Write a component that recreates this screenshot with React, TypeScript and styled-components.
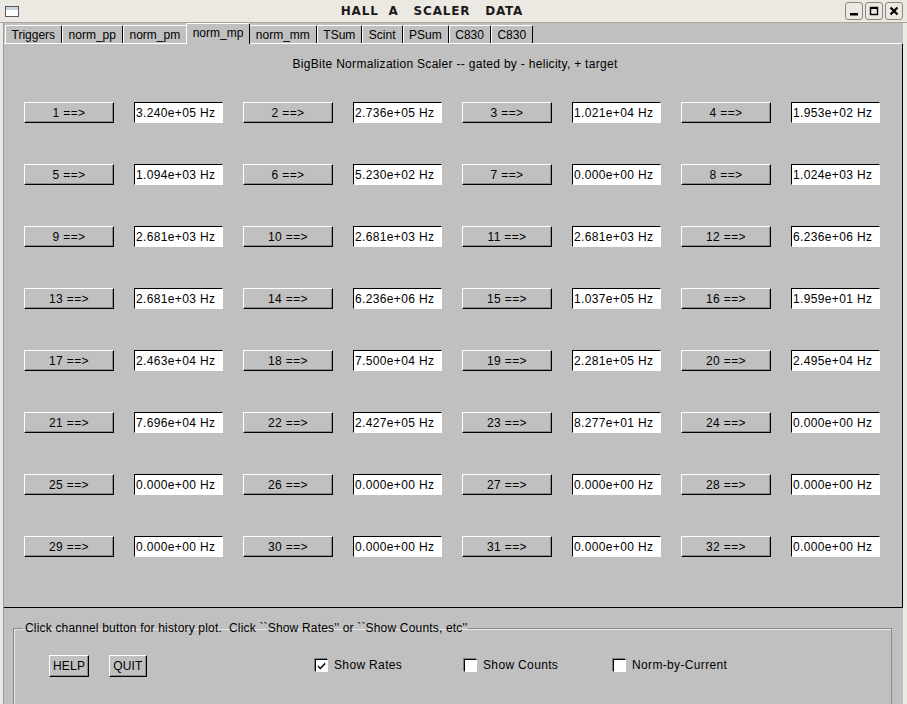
import React from 'react';
import styled, { createGlobalStyle } from 'styled-components';

const Global = createGlobalStyle`
  html, body { margin: 0; padding: 0; background: #ece9e2; }
  body { font-family: "Liberation Sans", Arial, Helvetica, sans-serif; font-size: 12px; letter-spacing: 0.35px; color: #000; }
  * { box-sizing: border-box; }
`;

const Window = styled.div`
  width: 907px;
  height: 704px;
  display: flex;
  flex-direction: column;
  background: #ece9e2;
  overflow: hidden;
`;

const TitleBar = styled.div`
  height: 23px;
  flex: none;
  display: flex;
  align-items: center;
  padding: 0 4px 0 5px;
  border-bottom: 1px solid #a9a59c;
`;

const TitleText = styled.div`
  flex: 1;
  text-align: center;
  white-space: pre;
  font-family: "DejaVu Sans", Verdana, sans-serif;
  font-weight: bold;
  font-size: 12px;
  letter-spacing: 0.8px;
  color: #1a1a1a;
`;

const TitleButtons = styled.div`
  display: flex;
  gap: 2px;
`;

const TitleButton = styled.div`
  width: 18px;
  height: 18px;
  border: 1px solid #8c877c;
  border-radius: 3px;
  background: #ece9e2;
  display: flex;
  align-items: center;
  justify-content: center;
`;

const Client = styled.div`
  flex: 1;
  display: flex;
  flex-direction: column;
  margin: 0 4px 0 3px;
  border-left: 1px solid #9a9a9a;
  background: #c0c0c0;
`;

const TabRow = styled.div`
  height: 20px;
  flex: none;
  display: flex;
  align-items: flex-end;
  padding-left: 1px;
  position: relative;
  z-index: 1;
`;

const Tab = styled.div<{ $active?: boolean }>`
  height: ${(p) => (p.$active ? 21 : 18)}px;
  margin: ${(p) => (p.$active ? '0 -1px -1px -1px' : '0')};
  padding: 2px 6px 0 5.5px;
  background: #c0c0c0;
  border-top: 1px solid #fff;
  border-left: 1px solid #fff;
  border-right: 1px solid #000;
  border-radius: 2px 2px 0 0;
  line-height: 14px;
  letter-spacing: 0;
  white-space: nowrap;
  position: relative;
  z-index: ${(p) => (p.$active ? 2 : 1)};
`;

const Panel = styled.div`
  height: 565px;
  flex: none;
  border-top: 1px solid #fff;
  border-right: 1px solid #000;
  border-bottom: 1px solid #000;
  display: flex;
  flex-direction: column;
  align-items: stretch;
`;

const Heading = styled.div`
  margin-top: 13px;
  line-height: 14px;
  text-align: center;
  padding-left: 4px;
  letter-spacing: 0.3px;
`;

const Grid = styled.div`
  margin-top: 31px;
  padding-left: 20px;
  display: grid;
  grid-template-columns: repeat(4, 90px 89px);
  grid-auto-rows: 21px;
  column-gap: 20px;
  row-gap: 41px;
`;

const ChanButton = styled.div`
  height: 21px;
  background: #c0c0c0;
  border: 1px solid;
  border-color: #fff #000 #000 #fff;
  box-shadow: inset -1px -1px 0 #8a8a8a;
  display: flex;
  align-items: center;
  justify-content: center;
  line-height: 14px;
  white-space: pre;
`;

const Entry = styled.div`
  height: 21px;
  background: #fff;
  border: 1px solid;
  border-color: #000 #fff #fff #000;
  display: flex;
  align-items: center;
  padding-left: 1px;
  line-height: 14px;
  white-space: nowrap;
`;

const Bottom = styled.div`
  flex: 1;
  padding: 13px 11px 0 9px;
`;

const Group = styled.fieldset`
  margin: 0;
  height: 120px;
  border: 1px solid #8a8a8a;
  box-shadow: inset 1px 1px 0 #e8e8e8;
  padding: 0;
`;

const Legend = styled.legend`
  margin-left: 9px;
  padding: 0 1px 0 2px;
  line-height: 14px;
  white-space: pre;
  letter-spacing: 0.18px;
`;

const Controls = styled.div`
  display: flex;
  align-items: center;
  margin-top: 20px;
  padding-left: 35px;
`;

const ButtonGroup = styled.div`
  width: 266px;
  display: flex;
  gap: 20px;
`;

const PushButton = styled.div`
  height: 22px;
  padding: 0 3px;
  background: #c0c0c0;
  border: 1px solid;
  border-color: #fff #000 #000 #fff;
  box-shadow: inset -1px -1px 0 #8a8a8a;
  display: flex;
  align-items: center;
  line-height: 14px;
  letter-spacing: 0.2px;
`;

const Check = styled.div`
  width: 149px;
  display: flex;
  align-items: center;
  gap: 6px;
  margin-top: -2px;
`;

const Box = styled.div`
  width: 13px;
  height: 13px;
  background: #fff;
  border: 1px solid;
  border-color: #000 #fff #fff #000;
  box-shadow: -1px -1px 0 #808080;
  display: flex;
  align-items: center;
  justify-content: center;
`;

const values = [
  ['3.240e+05', '2.736e+05', '1.021e+04', '1.953e+02'],
  ['1.094e+03', '5.230e+02', '0.000e+00', '1.024e+03'],
  ['2.681e+03', '2.681e+03', '2.681e+03', '6.236e+06'],
  ['2.681e+03', '6.236e+06', '1.037e+05', '1.959e+01'],
  ['2.463e+04', '7.500e+04', '2.281e+05', '2.495e+04'],
  ['7.696e+04', '2.427e+05', '8.277e+01', '0.000e+00'],
  ['0.000e+00', '0.000e+00', '0.000e+00', '0.000e+00'],
  ['0.000e+00', '0.000e+00', '0.000e+00', '0.000e+00'],
];

const tabs = ['Triggers', 'norm_pp', 'norm_pm', 'norm_mp', 'norm_mm', 'TSum', 'Scint', 'PSum', 'C830', 'C830'];

const WinIcon = () => (
  <svg width="14" height="11" viewBox="0 0 14 11">
    <rect x="0.5" y="0.5" width="13" height="10" fill="#fff" stroke="#5a5a5a" />
    <rect x="1" y="1" width="12" height="3" fill="#c9d4e4" />
  </svg>
);

const CheckBox = ({ checked, label }: { checked?: boolean; label: string }) => (
  <Check>
    <Box>
      {checked && (
        <svg width="9" height="9" viewBox="0 0 9 9">
          <path d="M0.8 4.2 L3.3 6.6 L8.2 1.2 L8.2 3.4 L3.3 8.4 L0.8 6 Z" fill="#000" />
        </svg>
      )}
    </Box>
    <span>{label}</span>
  </Check>
);

export default function App() {
  return (
    <>
      <Global />
      <Window>
        <TitleBar>
          <WinIcon />
          <TitleText>{'HALL  A   SCALER   DATA'}</TitleText>
          <TitleButtons>
            <TitleButton>
              <svg width="10" height="10" viewBox="0 0 10 10">
                <rect x="1" y="7" width="8" height="2.5" fill="#000" />
              </svg>
            </TitleButton>
            <TitleButton>
              <svg width="10" height="10" viewBox="0 0 10 10">
                <rect x="1.5" y="1.5" width="7" height="7" fill="none" stroke="#000" strokeWidth="1.4" />
                <rect x="1" y="1" width="8" height="2" fill="#000" />
              </svg>
            </TitleButton>
            <TitleButton>
              <svg width="10" height="10" viewBox="0 0 10 10">
                <path d="M1.5 1.5 L8.5 8.5 M8.5 1.5 L1.5 8.5" stroke="#000" strokeWidth="2.2" />
              </svg>
            </TitleButton>
          </TitleButtons>
        </TitleBar>
        <Client>
          <TabRow>
            {tabs.map((t, i) => (
              <Tab key={i} $active={t === 'norm_mp'}>
                {t}
              </Tab>
            ))}
          </TabRow>
          <Panel>
            <Heading>BigBite Normalization Scaler -- gated by - helicity, + target</Heading>
            <Grid>
              {values.map((row, r) =>
                row.map((v, c) => {
                  const n = r * 4 + c + 1;
                  return (
                    <React.Fragment key={n}>
                      <ChanButton>{`${n} ==>`}</ChanButton>
                      <Entry>{v} Hz</Entry>
                    </React.Fragment>
                  );
                })
              )}
            </Grid>
          </Panel>
          <Bottom>
            <Group>
              <Legend>{"Click channel button for history plot.  Click ``Show Rates'' or ``Show Counts, etc''"}</Legend>
              <Controls>
                <ButtonGroup>
                  <PushButton>HELP</PushButton>
                  <PushButton>QUIT</PushButton>
                </ButtonGroup>
                <CheckBox checked label="Show Rates" />
                <CheckBox label="Show Counts" />
                <CheckBox label="Norm-by-Current" />
              </Controls>
            </Group>
          </Bottom>
        </Client>
      </Window>
    </>
  );
}
